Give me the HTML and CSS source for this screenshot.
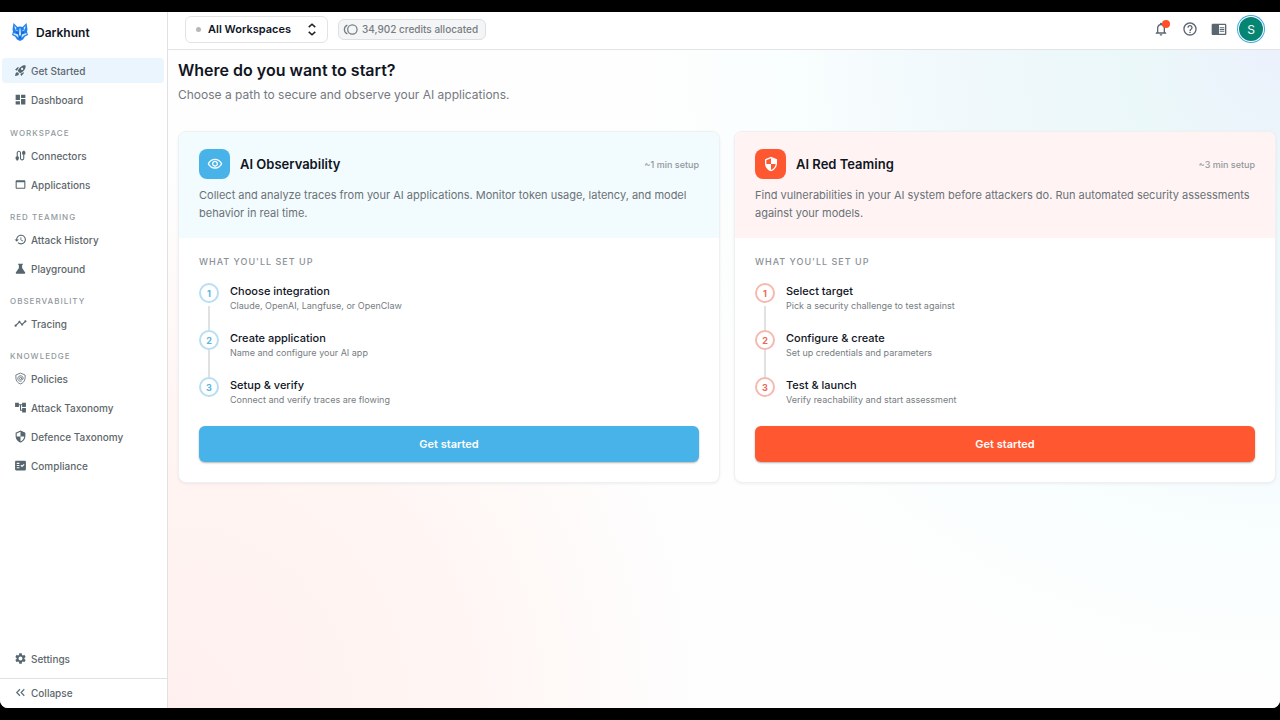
FILE: index.html
```html
<!DOCTYPE html>
<html lang="en">
<head>
<meta charset="utf-8">
<title>Darkhunt</title>
<link rel="stylesheet" href="styles.css">
</head>
<body>
<div class="app">
  <aside class="sidebar">
    <a class="brand" href="#">
      <svg class="brand-logo" viewBox="0 0 32 36">
        <path fill="#2080ee" d="M3 0l8 8 5-1 5 1 8-8 2 13-1 4 2 7-6 3-4 6-6 3-6-3-4-6-6-3 2-7-1-4z"/>
        <path fill="#d3eaff" d="M5 5l4 5-3 4zM27 5l-4 5 3 4zM3 20l9 3 1 7-5-5-5-2zM29 20l-9 3-1 7 5-5 5-2zM15 11h2l1 12-2 3-2-3zM7 15l6 1-5-3zM25 15l-6 1 5-3z"/>
        <path fill="#0d5fc9" d="M8 17l6 3-1 2-4-2zM24 17l-6 3 1 2 4-2zM13 28h6l-3 4z"/>
      </svg>
      <span>Darkhunt</span>
    </a>
    <nav class="nav">
      <ul class="nav-list nav-main">
        <li><a class="nav-item active" href="#"><svg class="icon" viewBox="0 0 24 24"><path d="M9.19 6.35c-2.04 2.29-3.44 5.58-3.57 5.89L2 10.69l4.05-4.05c.47-.47 1.15-.68 1.81-.55l1.33.26zM11.17 17s3.74-1.55 5.89-3.7c5.4-5.4 4.5-9.62 4.21-10.57-.95-.3-5.17-1.19-10.57 4.21C8.55 9.09 7 12.83 7 12.83L11.17 17zm6.48-2.19c-2.29 2.04-5.58 3.44-5.89 3.57L13.31 22l4.05-4.05c.47-.47.68-1.15.55-1.81l-.26-1.33zM9 18c0 .83-.34 1.58-.88 2.12C6.94 21.3 2 22 2 22s.7-4.94 1.88-6.12C4.42 15.34 5.17 15 6 15c1.66 0 3 1.34 3 3zm4-9c0-1.1.9-2 2-2s2 .9 2 2-.9 2-2 2-2-.9-2-2z"/></svg>Get Started</a></li>
        <li><a class="nav-item" href="#"><svg class="icon" viewBox="0 0 24 24"><path d="M3 13h8V3H3v10zm0 8h8v-6H3v6zm10 0h8V11h-8v10zm0-18v6h8V3h-8z"/></svg>Dashboard</a></li>
      </ul>
      <h2 class="nav-heading">Workspace</h2>
      <ul class="nav-list">
        <li><a class="nav-item" href="#"><svg class="icon" viewBox="0 0 24 24"><path d="M20 5V4c0-.55-.45-1-1-1h-2c-.55 0-1 .45-1 1v1h-1v4c0 .55.45 1 1 1h1v7c0 1.1-.9 2-2 2s-2-.9-2-2V7c0-2.21-1.79-4-4-4S5 4.79 5 7v7H4c-.55 0-1 .45-1 1v4h1v1c0 .55.45 1 1 1h2c.55 0 1-.45 1-1v-1h1v-4c0-.55-.45-1-1-1H7V7c0-1.1.9-2 2-2s2 .9 2 2v10c0 2.21 1.79 4 4 4s4-1.79 4-4v-7h1c.55 0 1-.45 1-1V5h-1z"/></svg>Connectors</a></li>
        <li><a class="nav-item" href="#"><svg class="icon" viewBox="0 0 24 24"><path d="M19 4H5c-1.11 0-2 .9-2 2v12c0 1.1.89 2 2 2h14c1.1 0 2-.9 2-2V6c0-1.1-.89-2-2-2zm0 14H5V8h14v10z"/></svg>Applications</a></li>
      </ul>
      <h2 class="nav-heading">Red Teaming</h2>
      <ul class="nav-list">
        <li><a class="nav-item" href="#"><svg class="icon" viewBox="0 0 24 24"><path d="M13 3c-4.97 0-9 4.03-9 9H1l3.89 3.89.07.14L9 12H6c0-3.87 3.13-7 7-7s7 3.13 7 7-3.13 7-7 7c-1.93 0-3.68-.79-4.94-2.06l-1.42 1.42C8.27 19.99 10.51 21 13 21c4.97 0 9-4.03 9-9s-4.03-9-9-9zm-1 5v5l4.28 2.54.72-1.21-3.5-2.08V8H12z"/></svg>Attack History</a></li>
        <li><a class="nav-item" href="#"><svg class="icon" viewBox="0 0 24 24"><path d="M20.6 19.4L15 11V5h1.5V3h-9v2H9v6L3.4 19.4c-.6 1 .1 2.1 1.1 2.1h15c1 0 1.7-1.1 1.1-2.1z"/></svg>Playground</a></li>
      </ul>
      <h2 class="nav-heading">Observability</h2>
      <ul class="nav-list">
        <li><a class="nav-item" href="#"><svg class="icon" viewBox="0 0 24 24"><path d="M23 8c0 1.1-.9 2-2 2-.18 0-.35-.02-.51-.07l-3.56 3.55c.05.16.07.34.07.52 0 1.1-.9 2-2 2s-2-.9-2-2c0-.18.02-.36.07-.52l-2.55-2.55c-.16.05-.34.07-.52.07s-.36-.02-.52-.07l-4.55 4.56c.05.16.07.33.07.51 0 1.1-.9 2-2 2s-2-.9-2-2 .9-2 2-2c.18 0 .35.02.51.07l4.56-4.55C8.02 9.36 8 9.18 8 9c0-1.1.9-2 2-2s2 .9 2 2c0 .18-.02.36-.07.52l2.55 2.55c.16-.05.34-.07.52-.07s.36.02.52.07l3.55-3.56C19.02 8.35 19 8.18 19 8c0-1.1.9-2 2-2s2 .9 2 2z"/></svg>Tracing</a></li>
      </ul>
      <h2 class="nav-heading">Knowledge</h2>
      <ul class="nav-list">
        <li><a class="nav-item" href="#"><svg class="icon icon-line icon-thin" viewBox="0 0 24 24"><path d="M12 2L3.500 5.500V11c0 5 3.500 9.600 8.500 11 5-1.400 8.500-6 8.500-11V5.500z"/><circle cx="12" cy="12" r="2"/><path d="M14.500 10v2.500c0 2 2.500 2 2.500-.5a5 5 0 1 0-2.500 4.300"/></svg>Policies</a></li>
        <li><a class="nav-item" href="#"><svg class="icon" viewBox="0 0 24 24"><path d="M22 11V3h-7v3H9V3H2v8h7V8h2v10h4v3h7v-8h-7v3h-2V8h2v3z"/></svg>Attack Taxonomy</a></li>
        <li><a class="nav-item" href="#"><svg class="icon" viewBox="0 0 24 24"><path d="M12 1L3 5v6c0 5.55 3.84 10.74 9 12 5.16-1.26 9-6.45 9-12V5l-9-4zm0 10.99h7c-.53 4.12-3.28 7.79-7 8.94V12H5V6.3l7-3.11v8.8z"/></svg>Defence Taxonomy</a></li>
        <li><a class="nav-item" href="#"><svg class="icon" viewBox="0 0 24 24"><path d="M20 3H4c-1.1 0-2 .9-2 2v14c0 1.1.9 2 2 2h16c1.1 0 2-.9 2-2V5c0-1.1-.9-2-2-2zM10 17H5v-2h5v2zm0-4H5v-2h5v2zm0-4H5V7h5v2zm4.82 6L12 12.16l1.41-1.41 1.41 1.42L17.99 9l1.42 1.42L14.82 15z"/></svg>Compliance</a></li>
      </ul>
    </nav>
    <a class="nav-item settings" href="#"><svg class="icon" viewBox="0 0 24 24"><path d="M19.14 12.94c.04-.3.06-.61.06-.94 0-.32-.02-.64-.07-.94l2.03-1.58c.18-.14.23-.41.12-.61l-1.92-3.32c-.12-.22-.37-.29-.59-.22l-2.39.96c-.5-.38-1.03-.7-1.62-.94l-.36-2.54c-.04-.24-.24-.41-.48-.41h-3.84c-.24 0-.43.17-.47.41l-.36 2.54c-.59.24-1.13.57-1.62.94l-2.39-.96c-.22-.08-.47 0-.59.22L2.74 8.87c-.12.21-.08.47.12.61l2.03 1.58c-.05.3-.09.63-.09.94s.02.64.07.94l-2.03 1.58c-.18.14-.23.41-.12.61l1.92 3.32c.12.22.37.29.59.22l2.39-.96c.5.38 1.03.7 1.62.94l.36 2.54c.05.24.24.41.48.41h3.84c.24 0 .44-.17.47-.41l.36-2.54c.59-.24 1.13-.56 1.62-.94l2.39.96c.22.08.47 0 .59-.22l1.92-3.32c.12-.22.07-.47-.12-.61l-2.01-1.58zM12 15.6c-1.98 0-3.6-1.62-3.6-3.6s1.62-3.6 3.6-3.6 3.6 1.62 3.6 3.6-1.62 3.6-3.6 3.6z"/></svg>Settings</a>
    <div class="sidebar-foot">
      <button class="nav-item" type="button"><svg class="icon icon-line" viewBox="0 0 24 24"><path d="M11 6l-6 6 6 6M19 6l-6 6 6 6"/></svg>Collapse</button>
    </div>
  </aside>

  <div class="page">
    <header class="topbar">
      <div class="workspace">
        <span class="workspace-dot"></span>
        <select class="workspace-select" aria-label="Workspace">
          <option>All Workspaces</option>
        </select>
        <svg class="workspace-arrows" viewBox="0 0 12 16"><path d="M2 5l4-3.500L10 5M2 11l4 3.500 4-3.500"/></svg>
      </div>
      <div class="credits">
        <svg class="credits-icon" viewBox="0 0 24 20"><circle cx="15" cy="10" r="7.500"/><path d="M7 3a7.500 7.500 0 0 0 0 14"/></svg>
        34,902 credits allocated
      </div>
      <div class="tools">
        <button class="tool" type="button" aria-label="Notifications">
          <svg viewBox="0 0 24 24"><path d="M12 22c1.1 0 2-.9 2-2h-4c0 1.1.9 2 2 2zm6-6v-5c0-3.07-1.63-5.64-4.5-6.32V4c0-.83-.67-1.5-1.5-1.5s-1.5.67-1.5 1.5v.68C7.64 5.36 6 7.92 6 11v5l-2 2v1h16v-1l-2-2zm-2 1H8v-6c0-2.48 1.51-4.5 4-4.5s4 2.02 4 4.5v6z"/></svg>
          <span class="tool-badge"></span>
        </button>
        <button class="tool" type="button" aria-label="Help">
          <svg viewBox="0 0 24 24"><path d="M11 18h2v-2h-2v2zm1-16C6.48 2 2 6.48 2 12s4.48 10 10 10 10-4.48 10-10S17.52 2 12 2zm0 18c-4.41 0-8-3.59-8-8s3.59-8 8-8 8 3.59 8 8-3.59 8-8 8zm0-14c-2.21 0-4 1.79-4 4h2c0-1.1.9-2 2-2s2 .9 2 2c0 2-3 1.75-3 5h2c0-2.25 3-2.5 3-5 0-2.21-1.79-4-4-4z"/></svg>
        </button>
        <button class="tool" type="button" aria-label="Documentation">
          <svg viewBox="0 0 24 24"><path d="M13 12h7v1.500h-7zm0-2.500h7V11h-7zm0 5h7V16h-7zM21 4H3c-1.100 0-2 .9-2 2v13c0 1.100.9 2 2 2h18c1.100 0 2-.9 2-2V6c0-1.100-.9-2-2-2zm0 15h-9V6h9v13z"/></svg>
        </button>
        <button class="avatar" type="button">S</button>
      </div>
    </header>

    <main class="content">
      <h1>Where do you want to start?</h1>
      <p class="lead">Choose a path to secure and observe your AI applications.</p>

      <div class="cards">
        <section class="card card-blue">
          <div class="card-head">
            <div class="card-title">
              <span class="card-icon"><svg viewBox="0 0 24 24"><path d="M12 6c3.79 0 7.17 2.13 8.82 5.5C19.17 14.87 15.79 17 12 17s-7.17-2.13-8.82-5.5C4.83 8.13 8.21 6 12 6m0-2C7 4 2.73 7.11 1 11.5 2.73 15.89 7 19 12 19s9.27-3.11 11-7.5C21.27 7.11 17 4 12 4zm0 5c1.38 0 2.5 1.12 2.5 2.5S13.38 14 12 14s-2.5-1.12-2.5-2.5S10.62 9 12 9m0-2c-2.48 0-4.5 2.02-4.5 4.5S9.52 16 12 16s4.5-2.02 4.5-4.5S14.48 7 12 7z"/></svg></span>
              <h2>AI Observability</h2>
              <span class="card-time">~1 min setup</span>
            </div>
            <p class="card-text">Collect and analyze traces from your AI applications. Monitor token usage, latency, and model behavior in real time.</p>
          </div>
          <div class="card-body">
            <h3>What you'll set up</h3>
            <ol class="steps">
              <li><span class="step-num">1</span><div><strong>Choose integration</strong><small>Claude, OpenAI, Langfuse, or OpenClaw</small></div></li>
              <li><span class="step-num">2</span><div><strong>Create application</strong><small>Name and configure your AI app</small></div></li>
              <li><span class="step-num">3</span><div><strong>Setup &amp; verify</strong><small>Connect and verify traces are flowing</small></div></li>
            </ol>
            <button class="start" type="button">Get started</button>
          </div>
        </section>

        <section class="card card-red">
          <div class="card-head">
            <div class="card-title">
              <span class="card-icon"><svg viewBox="0 0 24 24"><path d="M12 1L3 5v6c0 5.55 3.84 10.74 9 12 5.16-1.26 9-6.45 9-12V5l-9-4zm0 10.99h7c-.53 4.12-3.28 7.79-7 8.94V12H5V6.3l7-3.11v8.8z"/></svg></span>
              <h2>AI Red Teaming</h2>
              <span class="card-time">~3 min setup</span>
            </div>
            <p class="card-text">Find vulnerabilities in your AI system before attackers do. Run automated security assessments against your models.</p>
          </div>
          <div class="card-body">
            <h3>What you'll set up</h3>
            <ol class="steps">
              <li><span class="step-num">1</span><div><strong>Select target</strong><small>Pick a security challenge to test against</small></div></li>
              <li><span class="step-num">2</span><div><strong>Configure &amp; create</strong><small>Set up credentials and parameters</small></div></li>
              <li><span class="step-num">3</span><div><strong>Test &amp; launch</strong><small>Verify reachability and start assessment</small></div></li>
            </ol>
            <button class="start" type="button">Get started</button>
          </div>
        </section>
      </div>
    </main>
  </div>
</div>
</body>
</html>
```

FILE: styles.css
```css
* {
  box-sizing: border-box;
}
body {
  margin: 0;
  padding: 12px 0;
  background: #000;
  color: #10151f;
  font-family: Inter, "Liberation Sans", sans-serif;
  font-size: 10px;
}
h1, h2, h3, p, ul, ol {
  margin: 0;
  padding: 0;
}
ul, ol {
  list-style: none;
}
a {
  color: inherit;
  text-decoration: none;
}
button, select {
  border: 0;
  background: none;
  font: inherit;
  color: inherit;
  cursor: pointer;
}

.app {
  display: flex;
  min-height: calc(100vh - 24px);
  border-radius: 0 0 8px 8px;
  background: #fff;
  overflow: hidden;
}

/* sidebar */
.sidebar {
  display: flex;
  flex-direction: column;
  flex: 0 0 168px;
  border-right: 1px solid #dfe1e3;
  background: #fff;
}
.brand {
  display: flex;
  align-items: center;
  gap: 8px;
  height: 40px;
  margin-bottom: 6px;
  padding-left: 12px;
  font-size: 12px;
  font-weight: 600;
}
.brand-logo {
  width: 16px;
  height: 18px;
}
.nav {
  flex: 1;
}
.nav-list {
  display: grid;
  gap: 4px;
  padding: 0 3px 0 2px;
}
.nav-main {
  margin-bottom: 15px;
}
.nav-item {
  display: flex;
  align-items: center;
  gap: 4px;
  width: 100%;
  height: 25px;
  padding: 0 12px;
  border-radius: 4px;
  color: #5e676c;
  font-size: 10px;
  font-weight: 500;
}
.nav-item.active {
  background: #eaf5fe;
}
.nav-heading {
  padding-left: 10px;
  margin: 14px 0 3px;
  color: #92999e;
  font-size: 8px;
  line-height: 13px;
  font-weight: 500;
  letter-spacing: 1px;
  text-transform: uppercase;
}
.icon {
  width: 13px;
  height: 13px;
  fill: #56666e;
}
.icon-line {
  fill: none;
  stroke: #56666e;
  stroke-width: 2;
}
.icon-thin {
  stroke-width: 1.5;
}
.settings {
  margin-bottom: 7px;
  padding-left: 14px;
}
.sidebar-foot {
  padding: 1px 2px 3px;
  border-top: 1px solid #dfe1e3;
}

/* top bar */
.page {
  display: flex;
  flex-direction: column;
  flex: 1;
  min-width: 0;
}
.topbar {
  display: flex;
  align-items: center;
  height: 38px;
  padding: 0 13px 3px 17px;
  border-bottom: 1px solid #e2e4e6;
}
.workspace {
  position: relative;
}
.workspace-select {
  appearance: none;
  width: 143px;
  height: 27px;
  padding: 0 22px;
  border: 1px solid #e2e3e5;
  border-radius: 6px;
  color: #10151f;
  font-size: 11px;
  font-weight: 600;
}
.workspace-dot {
  position: absolute;
  left: 11px;
  top: 11px;
  width: 5px;
  height: 5px;
  border-radius: 50%;
  background: #b6b8ba;
}
.workspace-arrows {
  position: absolute;
  right: 11px;
  top: 7px;
  width: 10px;
  height: 13px;
  fill: none;
  stroke: #222;
  stroke-width: 2;
  pointer-events: none;
}
.credits {
  display: flex;
  align-items: center;
  gap: 4px;
  height: 21px;
  margin-left: 10px;
  padding: 0 7px 0 4px;
  border: 1px solid #dddfe1;
  border-radius: 6px;
  background: #f4f5f6;
  color: #777c81;
  font-weight: 500;
}
.credits-icon {
  width: 15px;
  height: 13px;
  fill: none;
  stroke: #777c81;
  stroke-width: 2;
}
.tools {
  display: flex;
  align-items: center;
  gap: 13px;
  margin-left: auto;
}
.tool {
  position: relative;
  display: flex;
  padding: 0;
}
.tool svg {
  width: 16px;
  height: 16px;
  fill: #5a6670;
}
.tool-badge {
  position: absolute;
  right: -1px;
  top: -1px;
  width: 8px;
  height: 8px;
  border-radius: 50%;
  background: #ff4f2a;
}
.avatar {
  width: 24px;
  height: 24px;
  margin: 0 4px 0 -1px;
  padding: 0;
  border-radius: 50%;
  background: #078573;
  box-shadow: 0 0 0 1px #fff, 0 0 0 2px #42a5e8;
  color: #fff;
  font-size: 12px;
}

/* content */
.content {
  flex: 1;
  padding: 8px 4px 20px 10px;
  background:
    radial-gradient(circle at 100% 0, #ecf1fc, #ebf8f9 12%, #f0f8fc 24%, #f9fefe 38%, transparent 50%),
    radial-gradient(circle at 0 100%, #fff0ef, #fff5f3 22%, transparent 42%),
    #fefefe;
}
h1 {
  font-size: 16px;
  line-height: 24px;
  font-weight: 600;
}
.lead {
  margin-top: 4px;
  color: #74797f;
  font-size: 12px;
  line-height: 18px;
}
.cards {
  display: grid;
  grid-template-columns: 1fr 1fr;
  gap: 14px;
  margin-top: 27px;
}
.card {
  border: 1px solid #eef0f1;
  border-radius: 8px;
  background: #fff;
  box-shadow: 0 1px 3px rgba(0, 0, 0, .06);
  overflow: hidden;
}
.card-head {
  padding: 17px 20px 16px;
}
.card-title {
  display: flex;
  align-items: center;
  gap: 10px;
}
.card-title h2 {
  font-size: 13px;
  font-weight: 600;
}
.card-icon {
  display: flex;
  align-items: center;
  justify-content: center;
  width: 31px;
  height: 30px;
  border-radius: 8px;
}
.card-icon svg {
  width: 16px;
  height: 16px;
  fill: #fff;
}
.card-time {
  margin-left: auto;
  color: #92979c;
  font-size: 9px;
  font-weight: 500;
}
.card-text {
  margin-top: 7px;
  color: #6a7177;
  font-size: 11px;
  line-height: 18px;
}
.card-body {
  padding: 18px 20px 20px;
}
.card-body h3 {
  margin-bottom: 15px;
  color: #8a9197;
  font-size: 9px;
  line-height: 12px;
  font-weight: 500;
  letter-spacing: 1px;
  text-transform: uppercase;
}
.steps li {
  position: relative;
  display: flex;
  gap: 11px;
  padding-bottom: 18px;
}
.steps li:last-child {
  padding-bottom: 0;
}
.steps li:not(:last-child)::before {
  content: "";
  position: absolute;
  left: 9px;
  top: 20px;
  bottom: 0;
  width: 2px;
  background: #dfe1e3;
}
.steps li:first-child::before {
  top: 23px;
}
.step-num {
  display: flex;
  align-items: center;
  justify-content: center;
  width: 20px;
  height: 20px;
  border: 2px solid;
  border-radius: 50%;
  font-size: 9px;
  font-weight: 700;
}
.steps strong, .steps small {
  display: block;
}
.steps strong {
  font-size: 11px;
  line-height: 16px;
  font-weight: 500;
}
.steps small {
  color: #777d82;
  font-size: 9px;
  line-height: 13px;
}
.start {
  width: 100%;
  height: 36px;
  margin-top: 20px;
  border-radius: 6px;
  color: #fff;
  font-size: 11px;
  font-weight: 600;
  box-shadow: 0 1px 2px rgba(0, 0, 0, .3);
}

.card-blue .card-head { background: #f2fbfd; }
.card-blue .card-icon,
.card-blue .start { background: #48b3e9; }
.card-blue .step-num { border-color: #b8def3; color: #58b5e2; }

.card-red .card-head { background: #fff4f3; }
.card-red .card-icon,
.card-red .start { background: #ff5730; }
.card-red .step-num { border-color: #f6b9af; color: #ec6753; }
```
